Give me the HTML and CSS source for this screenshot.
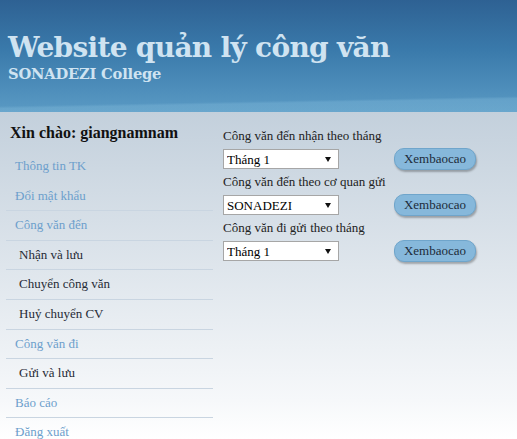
FILE: index.html
```html
<!DOCTYPE html>
<html lang="vi">
<head>
<meta charset="utf-8">
<title>Website quản lý công văn</title>
<link rel="stylesheet" href="styles.css">
</head>
<body>
<header class="banner">
  <h1 class="banner-title">Website quản lý công văn</h1>
  <p class="banner-sub">SONADEZI College</p>
</header>
<div class="main">
  <aside class="sidebar">
    <div class="greeting">Xin chào: giangnamnam</div>
    <ul class="menu">
      <li class="menu-item plain"><a href="#">Thông tin TK</a></li>
      <li class="menu-item plain"><a href="#">Đổi mật khẩu</a></li>
      <li class="menu-item"><a href="#">Công văn đến</a></li>
      <li class="menu-item sub"><a href="#">Nhận và lưu</a></li>
      <li class="menu-item sub"><a href="#">Chuyển công văn</a></li>
      <li class="menu-item sub"><a href="#">Huỷ chuyển CV</a></li>
      <li class="menu-item"><a href="#">Công văn đi</a></li>
      <li class="menu-item sub"><a href="#">Gửi và lưu</a></li>
      <li class="menu-item"><a href="#">Báo cáo</a></li>
      <li class="menu-item"><a href="#">Đăng xuất</a></li>
    </ul>
  </aside>
  <section class="reports">
    <div class="report">
      <div class="report-label">Công văn đến nhận theo tháng</div>
      <div class="report-controls">
        <div class="select-wrap">
          <select class="report-select"><option>Tháng 1</option></select>
        </div>
        <button class="report-btn" type="button">Xembaocao</button>
      </div>
    </div>
    <div class="report">
      <div class="report-label">Công văn đến theo cơ quan gửi</div>
      <div class="report-controls">
        <div class="select-wrap">
          <select class="report-select"><option>SONADEZI</option></select>
        </div>
        <button class="report-btn" type="button">Xembaocao</button>
      </div>
    </div>
    <div class="report">
      <div class="report-label">Công văn đi gửi theo tháng</div>
      <div class="report-controls">
        <div class="select-wrap">
          <select class="report-select"><option>Tháng 1</option></select>
        </div>
        <button class="report-btn" type="button">Xembaocao</button>
      </div>
    </div>
  </section>
</div>
</body>
</html>
```

FILE: styles.css
```css
html, body {
  margin: 0;
  padding: 0;
}

body {
  min-height: 100vh;
  font-family: "Liberation Serif", "DejaVu Serif", serif;
  font-size: 13px;
  color: #222;
  background: linear-gradient(to bottom, #c3d0dc 112px, #f6f8fa 400px, #ffffff 439px);
}

.banner {
  height: 112px;
  box-sizing: border-box;
  padding: 33px 8px 0;
  background:
    linear-gradient(178.9deg, rgba(255,255,255,0) 87%, rgba(140,195,225,0.3) 89%),
    linear-gradient(to bottom, #2e6193 0%, #3a7aab 45%, #5a9ac4 100%);
  color: #cfe3f1;
}

.banner-title {
  margin: 0;
  font-family: "DejaVu Serif", serif;
  font-weight: bold;
  font-size: 28px;
  line-height: 30px;
  letter-spacing: -0.7px;
}

.banner-sub {
  margin: 2px 0 0;
  font-family: "DejaVu Serif", serif;
  font-weight: bold;
  font-size: 14.7px;
  line-height: 18px;
  letter-spacing: -0.2px;
}

.main {
  display: flex;
  align-items: flex-start;
}

.sidebar {
  width: 207px;
  margin-left: 6px;
  padding-top: 12px;
}

.greeting {
  padding-left: 4px;
  font-weight: bold;
  font-size: 16px;
  line-height: 18px;
  color: #111;
  margin-bottom: 9px;
}

.menu {
  list-style: none;
  margin: 0;
  padding: 0;
}

.menu-item {
  border-top: 1px solid #c9d5e1;
}

.menu-item.plain {
  border-top: 1px solid transparent;
}

.menu-item a {
  display: block;
  padding: 6px 9px;
  line-height: 16.6px;
  font-size: 13px;
  color: #6d9fcc;
  text-decoration: none;
}

.menu-item.sub a {
  padding-left: 13px;
  color: #262b36;
}

.reports {
  margin-left: 10px;
  padding-top: 16px;
  display: flex;
  flex-direction: column;
  gap: 4px;
}

.report-label {
  font-size: 13px;
  line-height: 16px;
  color: #222;
}

.report-controls {
  margin-top: 4px;
  display: flex;
  align-items: center;
  gap: 55px;
}

.select-wrap {
  position: relative;
}

.report-select {
  appearance: none;
  -webkit-appearance: none;
  display: block;
  width: 116px;
  height: 20px;
  box-sizing: border-box;
  margin: 0;
  padding: 0 0 0 3px;
  border: 1px solid #a6a6a6;
  border-radius: 0;
  background: #fff;
  font-family: "Liberation Serif", "DejaVu Serif", serif;
  font-size: 13px;
  color: #000;
}

.select-wrap::after {
  content: "";
  position: absolute;
  right: 8px;
  top: 8px;
  border-left: 3px solid transparent;
  border-right: 3px solid transparent;
  border-top: 5px solid #111;
}

.report-btn {
  width: 82px;
  height: 22px;
  box-sizing: border-box;
  padding: 0;
  border: 1px solid #6fa5cb;
  border-radius: 10px;
  background: #86b8db;
  box-shadow: 1px 2px 2px rgba(0,0,0,0.28);
  font-family: "Liberation Serif", "DejaVu Serif", serif;
  font-size: 13px;
  color: #1d2b3a;
}
```
